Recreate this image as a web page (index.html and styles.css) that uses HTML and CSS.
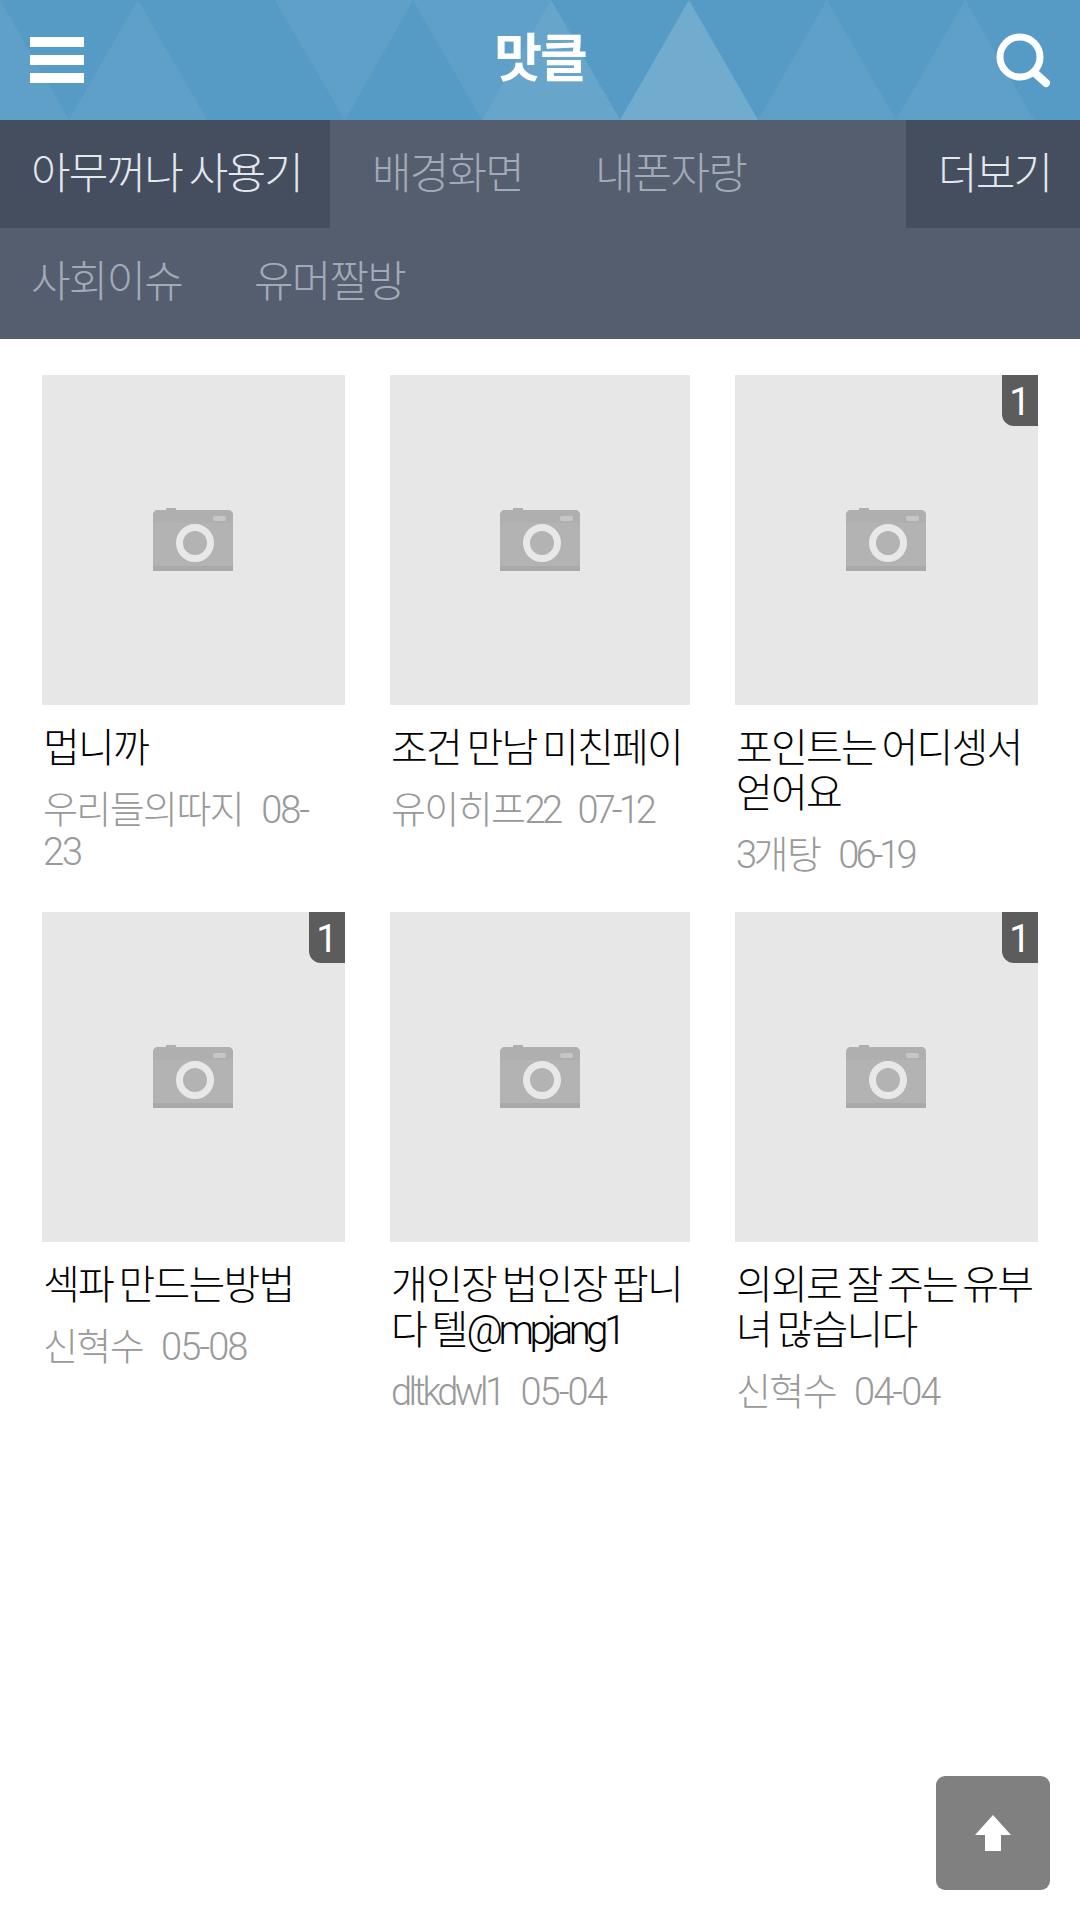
FILE: index.html
```html
<!DOCTYPE html>
<html lang="ko">
<head>
<meta charset="utf-8">
<title>맛클</title>
<link rel="stylesheet" href="styles.css">
</head>
<body>
<header class="topbar">
  <svg class="pattern" viewBox="0 0 1080 120" preserveAspectRatio="none" aria-hidden="true">
    <polygon class="l1" points="-69,120 0,0 69,120"/>
    <polygon class="l1" points="69,120 138,0 207,120"/>
    <polygon class="l1" points="275,0 413,0 345,120"/>
    <polygon class="l1" points="413,0 551,0 482,120"/>
    <polygon class="l2" points="482,120 551,0 620,120"/>
    <polygon class="l3" points="620,120 689,0 758,120"/>
    <polygon class="l1" points="758,120 827,0 896,120"/>
    <polygon class="l1" points="896,120 965,0 1034,120"/>
  </svg>
  <button class="menu-btn" aria-label="메뉴"><span></span><span></span><span></span></button>
  <h1 class="brand">맛클</h1>
  <svg class="search-btn" viewBox="0 0 56 60" aria-label="검색">
    <circle cx="24" cy="26" r="20" fill="none" stroke="#fff" stroke-width="7"/>
    <line x1="39" y1="42" x2="50" y2="52" stroke="#fff" stroke-width="8" stroke-linecap="round"/>
  </svg>
</header>

<nav class="tabs">
  <div class="tab-row">
    <a class="tab active">아무꺼나 사용기</a>
    <a class="tab">배경화면</a>
    <a class="tab">내폰자랑</a>
  </div>
  <div class="tab-row">
    <a class="tab">사회이슈</a>
    <a class="tab">유머짤방</a>
  </div>
  <a class="more">더보기</a>
</nav>

<main class="grid">
  <article class="card">
    <div class="thumb"><svg class="cam" viewBox="0 0 80 64"><use href="#camera"/></svg></div>
    <h2 class="title">멉니까</h2>
    <p class="meta">우리들의따지<span class="date">08-23</span></p>
  </article>
  <article class="card">
    <div class="thumb"><svg class="cam" viewBox="0 0 80 64"><use href="#camera"/></svg></div>
    <h2 class="title">조건 만남 미친페이</h2>
    <p class="meta">유이히프<span class="latin">22</span><span class="date tight">07-12</span></p>
  </article>
  <article class="card">
    <div class="thumb"><svg class="cam" viewBox="0 0 80 64"><use href="#camera"/></svg><span class="badge">1</span></div>
    <h2 class="title">포인트는 어디셍서 얻어요</h2>
    <p class="meta"><span class="latin">3</span>개탕<span class="date tight">06-19</span></p>
  </article>
  <article class="card">
    <div class="thumb"><svg class="cam" viewBox="0 0 80 64"><use href="#camera"/></svg><span class="badge">1</span></div>
    <h2 class="title">섹파 만드는방법</h2>
    <p class="meta">신혁수<span class="date">05-08</span></p>
  </article>
  <article class="card">
    <div class="thumb"><svg class="cam" viewBox="0 0 80 64"><use href="#camera"/></svg></div>
    <h2 class="title">개인장 법인장 팝니다 텔<span class="handle">@mpjang1</span></h2>
    <p class="meta"><span class="latin">dltkdwl1</span><span class="date">05-04</span></p>
  </article>
  <article class="card">
    <div class="thumb"><svg class="cam" viewBox="0 0 80 64"><use href="#camera"/></svg><span class="badge">1</span></div>
    <h2 class="title">의외로 잘 주는 유부녀 많습니다</h2>
    <p class="meta">신혁수<span class="date">04-04</span></p>
  </article>
</main>

<a class="to-top" aria-label="맨 위로">
  <svg viewBox="0 0 36 36"><polygon points="18,0 36,20 26,20 26,36 10,36 10,20 0,20" fill="#fff"/></svg>
</a>

<svg class="defs" aria-hidden="true">
  <symbol id="camera" viewBox="0 0 80 64">
    <path d="M13 0h10v2h52a5 5 0 0 1 5 5v56H0V7a5 5 0 0 1 5-5h8z" fill="#b3b3b3"/>
    <path d="M13 0h10v2h52a5 5 0 0 1 5 5v8H0V7a5 5 0 0 1 5-5h8z" fill="#afafaf"/>
    <rect y="58" width="80" height="5" fill="#a9a9a9"/>
    <rect x="60" y="8" width="13" height="5" rx="2" fill="#c6c6c6"/>
    <circle cx="42" cy="35" r="15.5" fill="none" stroke="#e8e8e8" stroke-width="7"/>
  </symbol>
</svg>
</body>
</html>
```

FILE: styles.css
```css
* { box-sizing: border-box; }
html, body { margin: 0; padding: 0; }
body {
  width: 1080px;
  height: 1920px;
  position: relative;
  overflow: hidden;
  background: #fff;
  font-family: "Roboto", "Noto Sans CJK KR", sans-serif;
  font-weight: 300;
}
.defs { display: none; }

.topbar {
  position: relative;
  height: 120px;
  background: #569bc5;
  display: flex;
  align-items: center;
  justify-content: center;
}
.pattern { position: absolute; inset: 0; width: 100%; height: 100%; }
.l1 { fill: rgba(255,255,255,.06); }
.l2 { fill: rgba(255,255,255,.1); }
.l3 { fill: rgba(255,255,255,.16); }
.menu-btn {
  position: absolute;
  left: 30px;
  top: 37px;
  width: 54px;
  padding: 0;
  border: 0;
  background: none;
  display: flex;
  flex-direction: column;
  gap: 8px;
}
.menu-btn span { display: block; height: 10px; background: #fff; }
.brand {
  position: relative;
  margin: 0 0 10px;
  color: #fff;
  font-size: 52px;
  font-weight: 700;
  line-height: 1;
  letter-spacing: -2px;
  font-family: "Noto Sans CJK KR", sans-serif;
}
.search-btn { position: absolute; left: 996px; top: 31px; width: 56px; height: 60px; }

.tabs {
  position: relative;
  height: 219px;
  background: #555e6e;
}
.tab-row { display: flex; height: 108px; }
.tab {
  height: 108px;
  padding: 0 30px 8px 31px;
  margin-right: 11px;
  display: flex;
  align-items: center;
  font-size: 43px;
  letter-spacing: -1.8px;
  word-spacing: -2px;
  color: #a2aab8;
}
.tab.active { background: #454e5e; color: #e3e7ee; width: 330px; white-space: nowrap; }
.more {
  position: absolute;
  right: 0;
  top: 0;
  width: 174px;
  height: 108px;
  padding: 0 0 8px 32px;
  display: flex;
  align-items: center;
  background: #454e5e;
  color: #e3e7ee;
  font-size: 43px;
  letter-spacing: -1.8px;
}

.grid {
  display: grid;
  grid-template-columns: 303px 300px 303px;
  column-gap: 45px;
  grid-auto-rows: 537px;
  padding: 36px 42px 0;
}
.thumb {
  position: relative;
  height: 330px;
  background: #e7e7e7;
  display: flex;
  align-items: center;
  justify-content: center;
}
.cam { width: 80px; height: 64px; margin-left: -1px; }
.badge {
  position: absolute;
  top: 0;
  right: 0;
  width: 36px;
  height: 51px;
  background: #5c5c5c;
  border-bottom-left-radius: 12px;
  color: #fff;
  font-size: 38px;
  font-weight: 400;
  line-height: 54px;
  text-align: center;
}
.title {
  margin: 21px 0 0;
  padding-left: 1px;
  color: #000;
  font-size: 40px;
  font-weight: 300;
  line-height: 45px;
  letter-spacing: -1.8px;
  word-spacing: -2.5px;
}
.handle { letter-spacing: -4.5px; }
.meta {
  margin: 18px 0 0;
  padding: 0 3px 0 1px;
  color: #999;
  font-size: 38px;
  line-height: 42px;
  letter-spacing: -1.6px;
}
.latin { letter-spacing: -3.5px; }
.date { margin-left: 18px; letter-spacing: -2px; }
.date.tight { letter-spacing: -4px; }

.to-top {
  position: absolute;
  left: 936px;
  top: 1776px;
  width: 114px;
  height: 114px;
  border-radius: 9px;
  background: #808080;
  display: flex;
  align-items: center;
  justify-content: center;
}
.to-top svg { width: 36px; height: 36px; }
```
